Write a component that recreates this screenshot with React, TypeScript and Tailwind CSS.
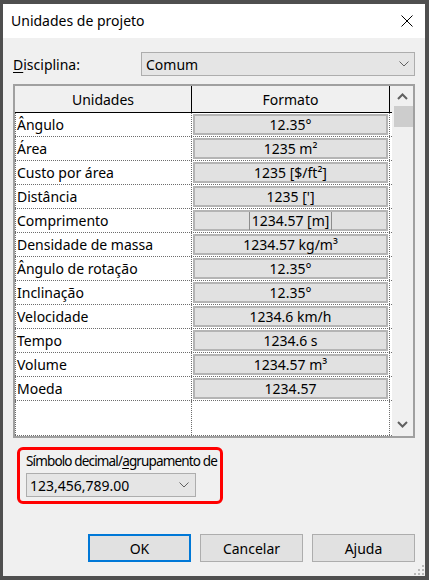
import React from "react";

const rows: { name: string; value: React.ReactNode; edit?: boolean }[] = [
  { name: "Ângulo", value: "12.35°" },
  { name: "Área", value: "1235 m²" },
  { name: "Custo por área", value: "1235 [$/ft²]" },
  { name: "Distância", value: "1235 [']" },
  { name: "Comprimento", value: "1234.57 [m]", edit: true },
  { name: "Densidade de massa", value: "1234.57 kg/m³" },
  { name: "Ângulo de rotação", value: "12.35°" },
  { name: "Inclinação", value: "12.35°" },
  { name: "Velocidade", value: "1234.6 km/h" },
  { name: "Tempo", value: "1234.6 s" },
  { name: "Volume", value: "1234.57 m³" },
  { name: "Moeda", value: "1234.57" },
];

function Chevron() {
  return (
    <svg width="10" height="6" viewBox="0 0 10 6" className="shrink-0">
      <path d="M0.5 0.5 L5 5 L9.5 0.5" fill="none" stroke="#606060" strokeWidth="1" />
    </svg>
  );
}

export default function App() {
  return (
    <div
      className="w-[429px] h-[580px] bg-[#4f4f4f] pt-[4px] pl-[3px] pr-[4px] pb-[4px] text-black"
      style={{ fontFamily: '"Segoe UI", "Noto Sans", "Open Sans", sans-serif' }}
    >
      <div className="w-full h-full bg-[#f0f0f0] flex flex-col relative">
        {/* Title bar */}
        <div className="h-[34px] bg-white flex items-center justify-between pl-[8px] pr-[12px] shrink-0">
          <span className="text-[14px] leading-none">Unidades de projeto</span>
          <svg width="12" height="12" viewBox="0 0 12 12">
            <path d="M0.5 0.5 L11.5 11.5 M11.5 0.5 L0.5 11.5" stroke="#000" strokeWidth="1" fill="none" />
          </svg>
        </div>

        <div className="flex-1 flex flex-col px-[10px] pt-[14px] text-[14px]">
          {/* Disciplina row */}
          <div className="flex items-center h-[24px]">
            <span className="w-[128px] shrink-0">
              <u className="underline-offset-2">D</u>isciplina:
            </span>
            <div className="flex-1 h-[24px] bg-[#e5e5e5] border border-[#adadad] flex items-center justify-between pl-[4px] pr-[5px]">
              <span>Comum</span>
              <Chevron />
            </div>
          </div>

          {/* Grid */}
          <div className="mt-[8px] h-[354px] border-2 border-[#a0a0a0] flex bg-white">
            <div className="flex-1 flex flex-col">
              {/* header */}
              <div className="h-[27px] flex bg-[#f0f0f0] border-b border-black shrink-0">
                <div className="w-[177px] border-r border-black flex items-center justify-center">
                  Unidades
                </div>
                <div className="w-[198px] border-r border-black flex items-center justify-center">
                  Formato
                </div>
              </div>
              {rows.map((r) => (
                <div key={r.name} className="h-[24px] flex border-b border-dotted border-[#6d6d6d] shrink-0">
                  <div className="w-[177px] border-r border-l border-dotted border-[#6d6d6d] flex items-center pl-[1px] whitespace-nowrap overflow-hidden">
                    {r.name}
                  </div>
                  <div className="w-[198px] border-r border-dotted border-[#6d6d6d] flex py-[1px] pl-[1px] pr-[1px]">
                    <div className="flex-1 bg-[#e1e1e1] border-2 border-[#b4b4b4] flex items-center justify-center">
                      {r.edit ? (
                        <span className="border-l border-r border-[#8c8c8c] px-[2px] leading-[18px]">{r.value}</span>
                      ) : (
                        <span>{r.value}</span>
                      )}
                    </div>
                  </div>
                </div>
              ))}
              <div className="flex-1 flex border-b border-dotted border-[#6d6d6d]">
                <div className="w-[177px] border-r border-l border-dotted border-[#6d6d6d]" />
                <div className="w-[198px] border-r border-dotted border-[#6d6d6d]" />
              </div>
            </div>
            {/* scrollbar */}
            <div className="w-[21px] bg-[#f0f0f0] flex flex-col shrink-0">
              <div className="h-[20px] flex items-center justify-center">
                <svg width="11" height="7" viewBox="0 0 11 7">
                  <path d="M1 6 L5.5 1.5 L10 6" fill="none" stroke="#606060" strokeWidth="2" />
                </svg>
              </div>
              <div className="h-[21px] ml-[2px] w-[19px] bg-[#cdcdcd]" />
              <div className="flex-1" />
              <div className="h-[20px] flex items-center justify-center mb-[2px]">
                <svg width="11" height="7" viewBox="0 0 11 7">
                  <path d="M1 1 L5.5 5.5 L10 1" fill="none" stroke="#606060" strokeWidth="2" />
                </svg>
              </div>
            </div>
          </div>

          {/* Red box */}
          <div className="mt-[9px] ml-[4px] w-[206px] h-[57px] border-[3px] border-[#ff0000] rounded-[6px] flex flex-col px-[6px]">
            <div className="h-[23px] flex items-center whitespace-nowrap text-[13.5px] tracking-[-0.85px]">
              <span>
                Símbolo decimal/<u className="underline-offset-2">a</u>grupamento de
              </span>
            </div>
            <div className="w-[170px] h-[24px] bg-[#e5e5e5] border border-[#adadad] flex items-center justify-between pl-[3px] pr-[6px]">
              <span>123,456,789.00</span>
              <Chevron />
            </div>
          </div>

          {/* Buttons */}
          <div className="mt-[30px] flex justify-end gap-[9px]">
            <div className="w-[103px] h-[28px] bg-[#e1e1e1] border-2 border-[#0078d7] flex items-center justify-center">
              OK
            </div>
            <div className="w-[103px] h-[28px] bg-[#e1e1e1] border border-[#adadad] flex items-center justify-center">
              Cancelar
            </div>
            <div className="w-[103px] h-[28px] bg-[#e1e1e1] border border-[#adadad] flex items-center justify-center">
              Ajuda
            </div>
          </div>
        </div>

        {/* resize grip */}
        <svg width="10" height="10" viewBox="0 0 10 10" className="absolute right-[1px] bottom-[1px]">
          <rect x="8" y="0" width="2" height="2" fill="#b8b8b8" />
          <rect x="4" y="4" width="2" height="2" fill="#b8b8b8" />
          <rect x="8" y="4" width="2" height="2" fill="#b8b8b8" />
          <rect x="0" y="8" width="2" height="2" fill="#b8b8b8" />
          <rect x="4" y="8" width="2" height="2" fill="#b8b8b8" />
          <rect x="8" y="8" width="2" height="2" fill="#b8b8b8" />
        </svg>
      </div>
    </div>
  );
}
